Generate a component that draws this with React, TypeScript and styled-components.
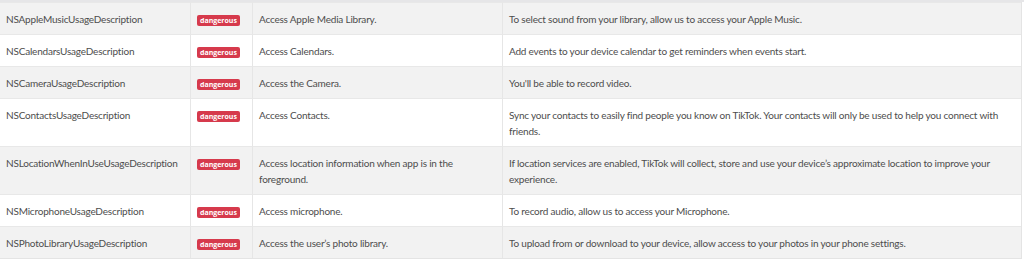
import React from "react";
import styled, { createGlobalStyle } from "styled-components";

const GlobalStyle = createGlobalStyle`
  html, body {
    margin: 0;
    padding: 0;
    background: #ffffff;
  }
  body {
    font-family: "Lato", "Open Sans", sans-serif;
  }
`;

interface Permission {
  key: string;
  summary: string;
  description: string;
}

const permissions: Permission[] = [
  {
    key: "NSAppleMusicUsageDescription",
    summary: "Access Apple Media Library.",
    description:
      "To select sound from your library, allow us to access your Apple Music.",
  },
  {
    key: "NSCalendarsUsageDescription",
    summary: "Access Calendars.",
    description:
      "Add events to your device calendar to get reminders when events start.",
  },
  {
    key: "NSCameraUsageDescription",
    summary: "Access the Camera.",
    description: "You'll be able to record video.",
  },
  {
    key: "NSContactsUsageDescription",
    summary: "Access Contacts.",
    description:
      "Sync your contacts to easily find people you know on TikTok. Your contacts will only be used to help you connect with friends.",
  },
  {
    key: "NSLocationWhenInUseUsageDescription",
    summary: "Access location information when app is in the foreground.",
    description:
      "If location services are enabled, TikTok will collect, store and use your device\u2019s approximate location to improve your experience.",
  },
  {
    key: "NSMicrophoneUsageDescription",
    summary: "Access microphone.",
    description: "To record audio, allow us to access your Microphone.",
  },
  {
    key: "NSPhotoLibraryUsageDescription",
    summary: "Access the user\u2019s photo library.",
    description:
      "To upload from or download to your device, allow access to your photos in your phone settings.",
  },
];

const Frame = styled.div`
  width: 1024px;
  height: 260px;
  padding-right: 2px;
  box-sizing: border-box;
  background: #ffffff;
  border-top: 2px solid #e6e6e8;
`;

const Table = styled.div`
  display: grid;
  grid-template-columns: 190px 62px 250px 1fr;
  border-right: 1px solid #e4e4e4;
  border-bottom: 1px solid #e4e4e4;
`;

const Row = styled.div<{ $striped: boolean }>`
  display: contents;

  & > div {
    background: ${(p) => (p.$striped ? "#f2f2f2" : "#ffffff")};
  }
`;

const Cell = styled.div<{ $first?: boolean }>`
  padding: 8px 8px 7px 6px;
  font-size: 10px;
  letter-spacing: -0.2px;
  line-height: 16px;
  color: #4d4d4d;
  border-top: 1px solid #e8e8e8;
  border-left: ${(p) => (p.$first ? "none" : "1px solid #e6e6e6")};
`;

const BadgeCell = styled(Cell)`
  padding-right: 4px;
`;

const Badge = styled.span`
  display: inline-block;
  background: #d63a4c;
  color: #ffffff;
  font-family: "Open Sans", sans-serif;
  font-size: 7px;
  font-weight: 700;
  letter-spacing: 0;
  line-height: 11px;
  height: 11px;
  padding: 0 3px;
  border-radius: 2px;
  vertical-align: middle;
`;

export default function App() {
  return (
    <>
      <GlobalStyle />
      <Frame>
        <Table>
          {permissions.map((p, i) => (
            <Row key={p.key} $striped={i % 2 === 0}>
              <Cell $first>{p.key}</Cell>
              <BadgeCell>
                <Badge>dangerous</Badge>
              </BadgeCell>
              <Cell>{p.summary}</Cell>
              <Cell>{p.description}</Cell>
            </Row>
          ))}
        </Table>
      </Frame>
    </>
  );
}
